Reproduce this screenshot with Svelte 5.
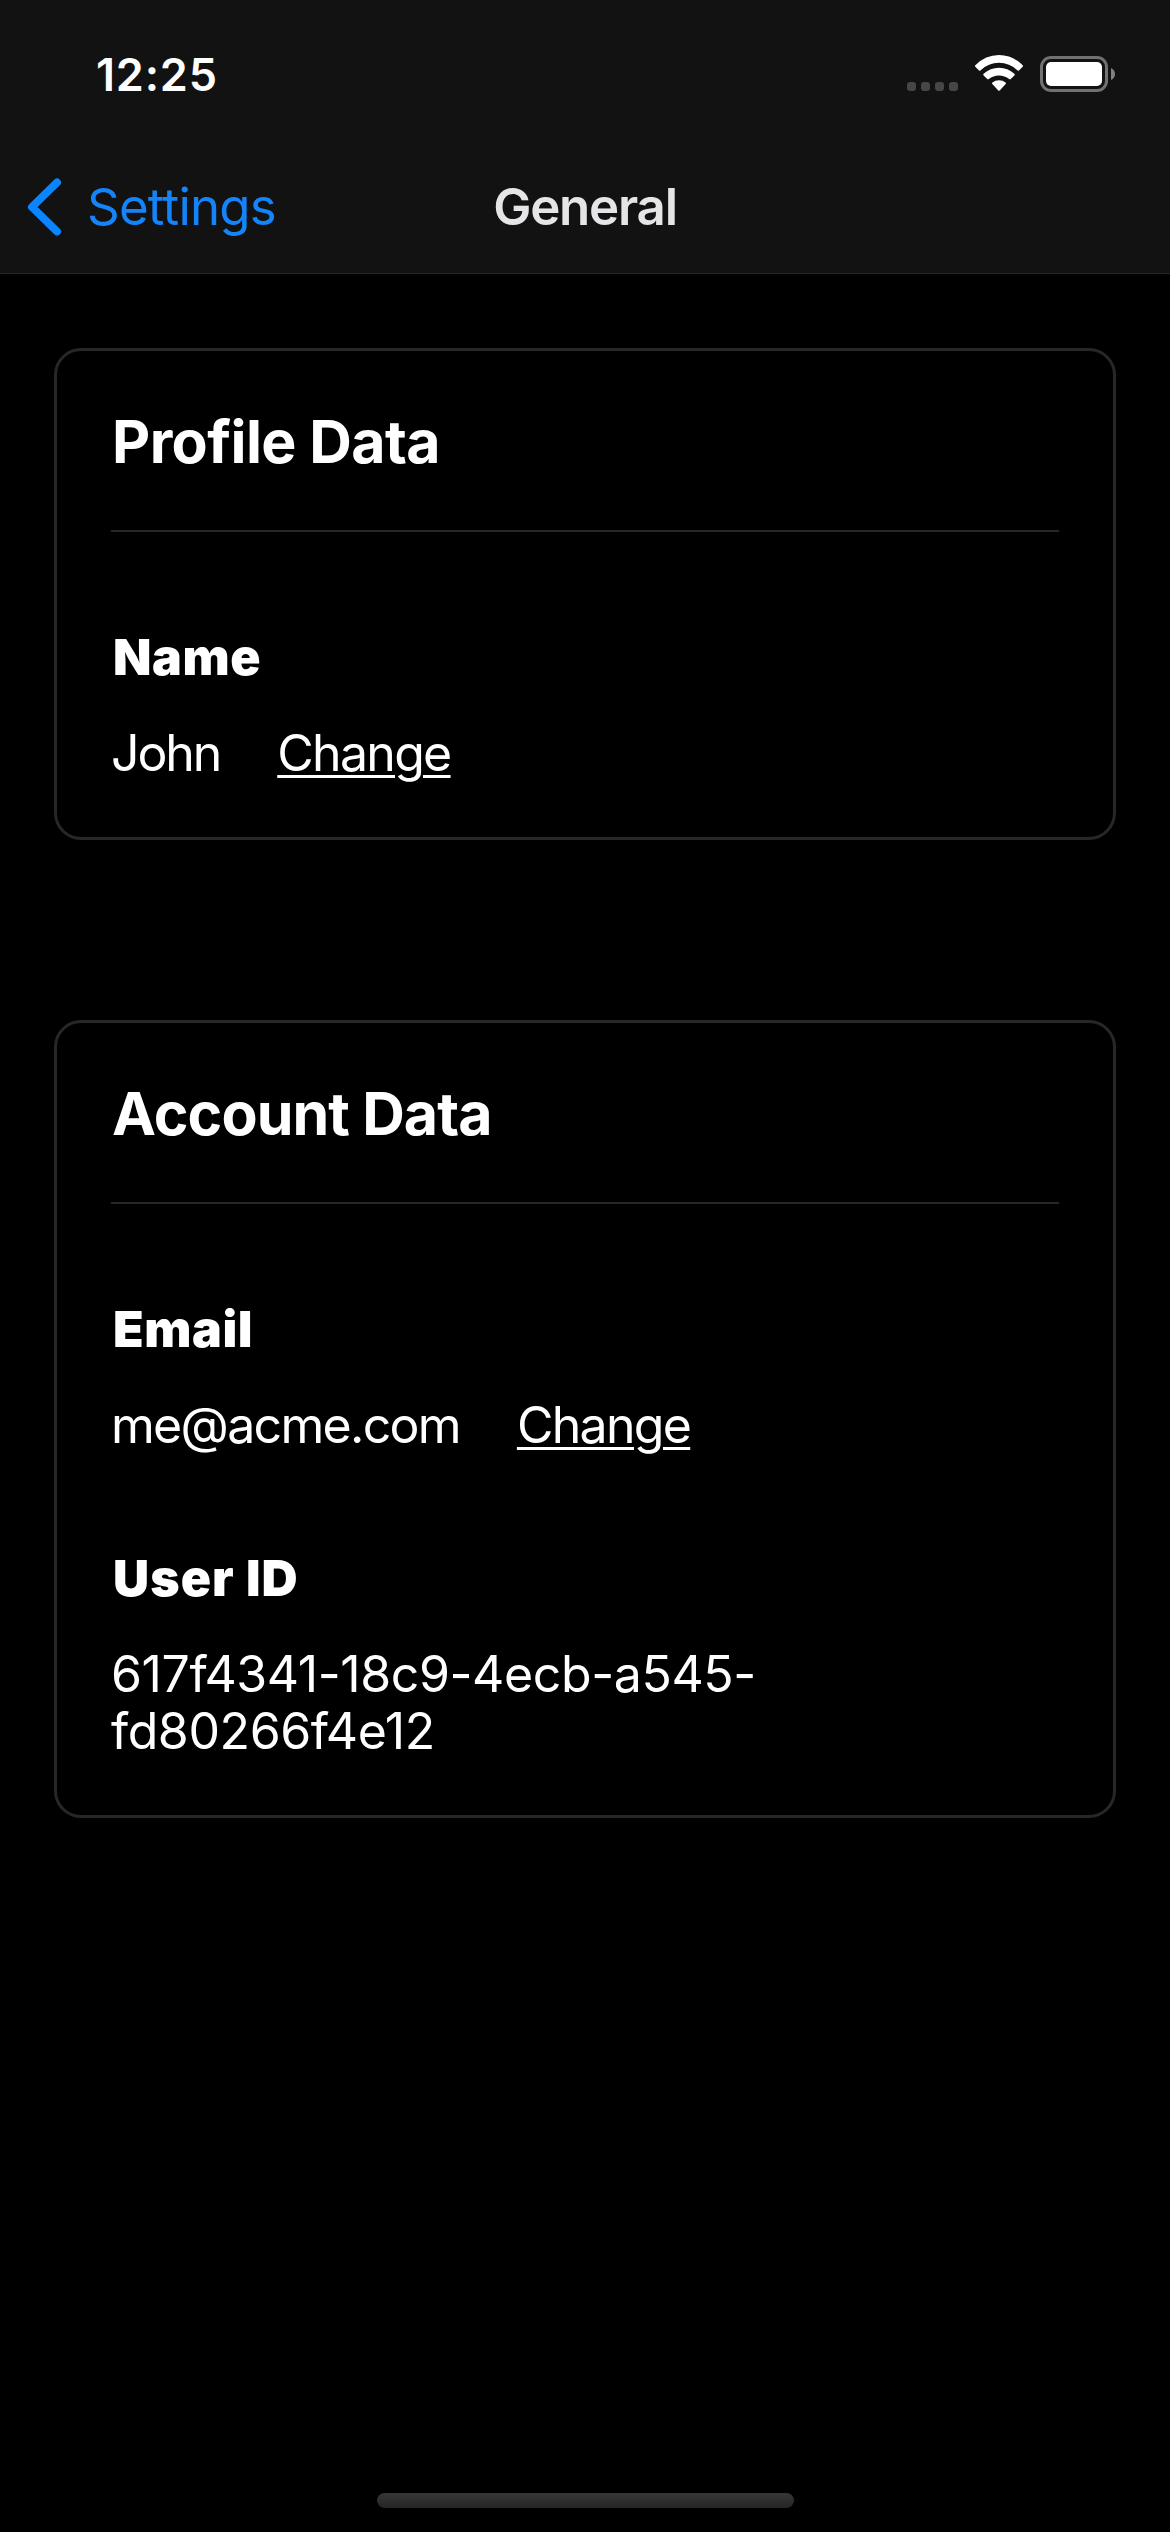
<script>
  const cards = [
    {
      title: 'Profile Data',
      titleClass: 'profile',
      fields: [{ id: 'name', label: 'Name', value: 'John', action: 'Change' }]
    },
    {
      title: 'Account Data',
      titleClass: 'account',
      fields: [
        { id: 'email', label: 'Email', value: 'me@acme.com', action: 'Change' },
        { id: 'uid', label: 'User ID', value: '617f4341-18c9-4ecb-a545-fd80266f4e12' }
      ]
    }
  ];
</script>

<div class="screen">
  <header>
    <div class="status">
      <span class="time">12:25</span>
      <svg class="indicators" width="210" height="40" viewBox="906 54 210 40">
        <g fill="#464646">
          <rect x="907" y="82" width="9" height="9" rx="3" />
          <rect x="921" y="82" width="9" height="9" rx="3" />
          <rect x="935" y="82" width="9" height="9" rx="3" />
          <rect x="949" y="82" width="9" height="9" rx="3" />
        </g>
        <g fill="#fff">
          <path d="M975.3 65.2Q985.5 55 999 55T1022.7 65.2Q1023.4 66 1022.7 66.8L1019 70.4Q1018.3 71 1017.6 70.4Q1009.500 62.800 999 62.800T980.400 70.400Q979.700 71 979 70.400L975.300 66.800Q974.600 66 975.300 65.200Z" />
          <path d="M983.600 73.800Q990.200 67.800 999 67.800T1014.400 73.800Q1015.200 74.600 1014.400 75.400L1010.700 79.100Q1010 79.700 1009.200 79.100Q1004.700 75.400 999 75.400T988.800 79.100Q988 79.700 987.300 79.100L983.600 75.400Q982.800 74.600 983.600 73.800Z" />
          <path d="M992.400 82.500Q995.200 80.300 999 80.300T1005.600 82.500Q1006.500 83.300 1005.700 84.100L999.700 90.400Q999 91.100 998.300 90.400L992.300 84.100Q991.500 83.300 992.400 82.500Z" />
        </g>
        <rect x="1041.500" y="57.500" width="65" height="33" rx="9.500" fill="none" stroke="#717171" stroke-width="3" />
        <rect x="1046" y="62" width="56" height="24" rx="5" fill="#fff" />
        <path d="M1111 68Q1115 70 1115 74T1111 80Z" fill="#818181" />
      </svg>
    </div>
    <nav>
      <div class="back">
        <svg width="36" height="60" viewBox="0 0 36 60">
          <path d="M31 5.500L6 30L31 54.500" fill="none" stroke="#0a84ff" stroke-width="8" stroke-linecap="round" stroke-linejoin="round" />
        </svg>
        <span class="settings">Settings</span>
      </div>
      <h1><span>General</span></h1>
      <div></div>
    </nav>
  </header>

  <main>
    {#each cards as card}
      <section>
        <h2><span class={card.titleClass}>{card.title}</span></h2>
        {#each card.fields as field}
          <div class="field {field.id}">
            <h3><span>{field.label}</span></h3>
            <div class="row">
              <span class="value">{field.value}</span>
              {#if field.action}<span class="action">{field.action}</span>{/if}
            </div>
          </div>
        {/each}
      </section>
    {/each}
  </main>

  <footer><div class="home"></div></footer>
</div>

<style>
  :global(body) { background: #000; }
  .screen {
    width: 1170px;
    height: 2532px;
    display: flex;
    flex-direction: column;
    box-sizing: border-box;
    background: #000;
    color: #fff;
    font-family: Inter, "Liberation Sans", sans-serif;
  }
  header {
    height: 274px;
    flex: none;
    box-sizing: border-box;
    background: #121212;
    border-bottom: 1px solid #272729;
  }
  .status {
    height: 141px;
    box-sizing: border-box;
    padding: 54px 54px 0 96px;
    display: flex;
    justify-content: space-between;
    align-items: flex-start;
  }
  .time {
    font-size: 45px;
    font-weight: 600;
    line-height: 42px;
    letter-spacing: 0.8px;
  }
  nav {
    height: 132px;
    display: grid;
    grid-template-columns: 1fr auto 1fr;
    align-items: center;
  }
  .back {
    display: flex;
    align-items: center;
    padding-left: 26px;
    gap: 25px;
    color: #1484fa;
  }
  .settings { font-size: 51px; line-height: 60px; letter-spacing: -0.8px; }
  h1, h2, h3 { margin: 0; }
  h1 { font-size: 51px; font-weight: 600; line-height: 60px; letter-spacing: -1.2px; color: #e5e5e7; }
  main {
    flex: 1;
    display: flex;
    flex-direction: column;
    gap: 180px;
    padding: 74px 54px 0;
  }
  section {
    border: 3px solid #272729;
    border-radius: 27px;
    padding: 54px 54px 55px;
  }
  h2 {
    font-size: 59px;
    font-weight: 700;
    line-height: 73px;
    padding-bottom: 52px;
    border-bottom: 2px solid #272729;
    padding-left: 1px;
    letter-spacing: -0.9px;
  }
  .profile { letter-spacing: -0.6px; }
  .field { margin-top: 97px; }
  .field + .field { margin-top: 96px; }
  h3 {
    padding-left: 2px;
    font-size: 50px;
    font-weight: 900;
    line-height: 57px;
    letter-spacing: 0.6px;
  }
  .uid h3 { letter-spacing: 1.1px; }
  .row {
    margin-top: 39px;
    display: flex;
    gap: 57px;
    font-size: 50px;
    line-height: 57px;
    letter-spacing: -1.7px;
  }
  .name .value { letter-spacing: -2.1px; }
  .email .value { letter-spacing: -1.7px; }
  .uid .value { max-width: 700px; letter-spacing: -0.4px; }
  .action {
    text-decoration: underline;
    text-decoration-thickness: 3px;
    text-underline-offset: 4px;
  }
  footer {
    height: 39px;
    flex: none;
    display: flex;
    justify-content: center;
    align-items: flex-start;
  }
  .home {
    width: 417px;
    height: 15px;
    border-radius: 8px;
    background: linear-gradient(#373737, #252525);
  }
</style>
